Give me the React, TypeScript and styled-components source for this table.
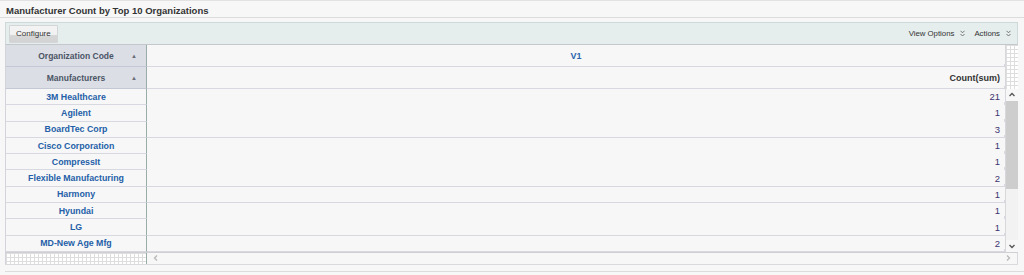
import styled, { createGlobalStyle } from 'styled-components';

const GlobalStyle = createGlobalStyle`
	body {
		margin: 0;
		background-color: #f7f7f7;
		font-family: 'Liberation Sans', Arial, sans-serif;
	}
`;

const Page = styled.div`
	width: 1024px;
	height: 275px;
	overflow: hidden;
	border-top: 1px solid #e2e2e2;
	box-sizing: border-box;
`;

const Title = styled.div`
	margin-top: 4px;
	padding: 0 6px;
	height: 12px;
	font-size: 9.5px;
	font-weight: bold;
	color: #333333;
	border-bottom: 1px solid #dcdcdc;
	line-height: 12px;
`;

const Panel = styled.div`
	margin: 4px 0 0 5px;
	width: 1013px;
`;

const Toolbar = styled.div`
	display: flex;
	align-items: center;
	justify-content: space-between;
	height: 21px;
	padding: 0 3px;
	background-color: #e5eded;
	border: 1px solid #cfd8d8;
	border-bottom-color: #c4c8cc;
`;

const ConfigButton = styled.button`
	height: 18px;
	padding: 0 6px;
	font-family: 'Liberation Sans', Arial, sans-serif;
	font-size: 8px;
	color: #333333;
	border: 1px solid #d2d6d6;
	border-radius: 1px;
	background: linear-gradient(#f4f4f4 0%, #f0f0f0 55%, #d6d6d6 56%, #d3d3d3 100%);
	cursor: pointer;
`;

const ToolLinks = styled.div`
	display: flex;
	align-items: center;
	gap: 9px;
	padding-right: 3px;
`;

const ToolLink = styled.span`
	display: flex;
	align-items: center;
	gap: 6px;
	font-size: 7.8px;
	color: #333333;
`;

const Grid = styled.div`
	display: flex;
`;

const Main = styled.div`
	flex: 1;
	display: flex;
	flex-direction: column;
`;

const Row = styled.div<{ $h: number; $ruled?: boolean }>`
	display: flex;
	height: ${(p) => p.$h}px;
	box-sizing: border-box;
	border-bottom: 1px solid ${(p) => (p.$ruled ? '#d8d8e0' : 'transparent')};
`;

const RowHead = styled.div<{ $head?: boolean }>`
	position: relative;
	width: 142px;
	display: flex;
	align-items: center;
	justify-content: center;
	font-size: ${(p) => (p.$head ? '8.5px' : '8.8px')};
	font-weight: bold;
	color: ${(p) => (p.$head ? '#4b5565' : '#245fa8')};
	background-color: ${(p) => (p.$head ? '#dcdee6' : '#f7f7f7')};
	border-left: 1px solid #d2d4da;
	border-right: 1px solid #9aaca8;
	border-bottom: 1px solid ${(p) => (p.$head ? '#c4c8d4' : '#d8d8e0')};
	margin-bottom: -1px;
	box-sizing: border-box;
`;

const SortMark = styled.span`
	position: absolute;
	right: 9px;
	top: 50%;
	transform: translateY(-50%);
	font-size: 6px;
	color: #6a6e78;
`;

const ValueCell = styled.div<{ $align: 'center' | 'flex-end'; $tone: 'link' | 'head' | 'num' }>`
	position: relative;
	flex: 1;
	display: flex;
	align-items: center;
	justify-content: ${(p) => p.$align};
	padding: 0 5px;
	font-size: ${(p) => (p.$tone === 'num' ? '9.5px' : '9px')};
	font-weight: ${(p) => (p.$tone === 'num' ? 'normal' : 'bold')};
	color: ${(p) => (p.$tone === 'link' ? '#2a66ae' : p.$tone === 'head' ? '#333333' : '#3e3470')};
	&::after {
		content: '';
		position: absolute;
		right: 0;
		bottom: -1px;
		width: 1px;
		height: 3px;
		background-color: #d8d8e0;
	}
`;

const SideColumn = styled.div`
	width: 13px;
	display: flex;
	flex-direction: column;
	border-left: 1px solid #d8d8dc;
	box-sizing: border-box;
`;

const Hatch = styled.div<{ $h?: number }>`
	height: ${(p) => (p.$h ? `${p.$h}px` : 'auto')};
	background-color: #ffffff;
	background-image: linear-gradient(#dedede 1px, transparent 1px),
		linear-gradient(90deg, #dedede 1px, transparent 1px);
	background-size: 4px 4px;
`;

const VScroll = styled.div`
	flex: 1;
	display: flex;
	flex-direction: column;
	background-color: #f0f0f0;
`;

const ScrollArrow = styled.div`
	height: 12px;
	display: flex;
	align-items: center;
	justify-content: center;
	background-color: #f7f7f7;
`;

const Thumb = styled.div`
	height: 88px;
	background-color: #cdcdcd;
`;

const Track = styled.div`
	flex: 1;
	background-color: #f2f2f2;
`;

const HScrollRow = styled.div`
	display: flex;
	height: 11px;
	border-top: 1px solid #d0d0d4;
	border-bottom: 1px solid #dadade;
`;

const HScrollLeft = styled(Hatch)`
	width: 142px;
	box-sizing: border-box;
	border-left: 1px solid #d2d4da;
	border-right: 1px solid #9aaca8;
`;

const HScrollTrack = styled.div`
	flex: 1;
	display: flex;
	align-items: center;
	justify-content: space-between;
	padding: 0 5px;
	border-right: 1px solid #d8d8dc;
`;

const BottomLine = styled.div`
	margin: 6px 0 0 5px;
	border-top: 1px solid #dcdcdc;
`;

const Chevrons = () => (
	<svg width="5" height="7" viewBox="0 0 5 7">
		<path d="M0.5 0.8 L2.5 2.8 L4.5 0.8 M0.5 4 L2.5 6 L4.5 4" stroke="#666" strokeWidth="0.9" fill="none" />
	</svg>
);

const Arrow = ({ dir }: { dir: 'up' | 'down' | 'left' | 'right' }) => {
	const paths = {
		up: 'M1.5 5 L4 2.5 L6.5 5',
		down: 'M1.5 3 L4 5.5 L6.5 3',
		left: 'M5 1.5 L2.5 4 L5 6.5',
		right: 'M3 1.5 L5.5 4 L3 6.5',
	};
	const color = dir === 'left' || dir === 'right' ? '#b8b8b8' : '#555';
	return (
		<svg width="8" height="8" viewBox="0 0 8 8">
			<path d={paths[dir]} stroke={color} strokeWidth="1.3" fill="none" />
		</svg>
	);
};

const rows = [
	{ name: '3M Healthcare', count: 21, ruled: false },
	{ name: 'Agilent', count: 1, ruled: false },
	{ name: 'BoardTec Corp', count: 3, ruled: true },
	{ name: 'Cisco Corporation', count: 1, ruled: false },
	{ name: 'CompressIt', count: 1, ruled: false },
	{ name: 'Flexible Manufacturing', count: 2, ruled: true },
	{ name: 'Harmony', count: 1, ruled: true },
	{ name: 'Hyundai', count: 1, ruled: false },
	{ name: 'LG', count: 1, ruled: true },
	{ name: 'MD-New Age Mfg', count: 2, ruled: true },
];

const App = () => {
	return (
		<Page>
			<GlobalStyle />
			<Title>Manufacturer Count by Top 10 Organizations</Title>
			<Panel>
				<Toolbar>
					<ConfigButton>Configure</ConfigButton>
					<ToolLinks>
						<ToolLink>
							View Options <Chevrons />
						</ToolLink>
						<ToolLink>
							Actions <Chevrons />
						</ToolLink>
					</ToolLinks>
				</Toolbar>
				<Grid>
					<Main>
						<Row $h={22} $ruled>
							<RowHead $head>
								Organization Code
								<SortMark>▲</SortMark>
							</RowHead>
							<ValueCell $align="center" $tone="link">
								V1
							</ValueCell>
						</Row>
						<Row $h={22} $ruled>
							<RowHead $head>
								Manufacturers
								<SortMark>▲</SortMark>
							</RowHead>
							<ValueCell $align="flex-end" $tone="head">
								Count(sum)
							</ValueCell>
						</Row>
						{rows.map((r) => (
							<Row key={r.name} $h={16.3} $ruled={r.ruled}>
								<RowHead>{r.name}</RowHead>
								<ValueCell $align="flex-end" $tone="num">
									{r.count}
								</ValueCell>
							</Row>
						))}
					</Main>
					<SideColumn>
						<Hatch $h={44} />
						<VScroll>
							<ScrollArrow>
								<Arrow dir="up" />
							</ScrollArrow>
							<Thumb />
							<Track />
							<ScrollArrow>
								<Arrow dir="down" />
							</ScrollArrow>
						</VScroll>
					</SideColumn>
				</Grid>
				<HScrollRow>
					<HScrollLeft />
					<HScrollTrack>
						<Arrow dir="left" />
						<Arrow dir="right" />
					</HScrollTrack>
				</HScrollRow>
			</Panel>
			<BottomLine />
		</Page>
	);
};

export default App;
